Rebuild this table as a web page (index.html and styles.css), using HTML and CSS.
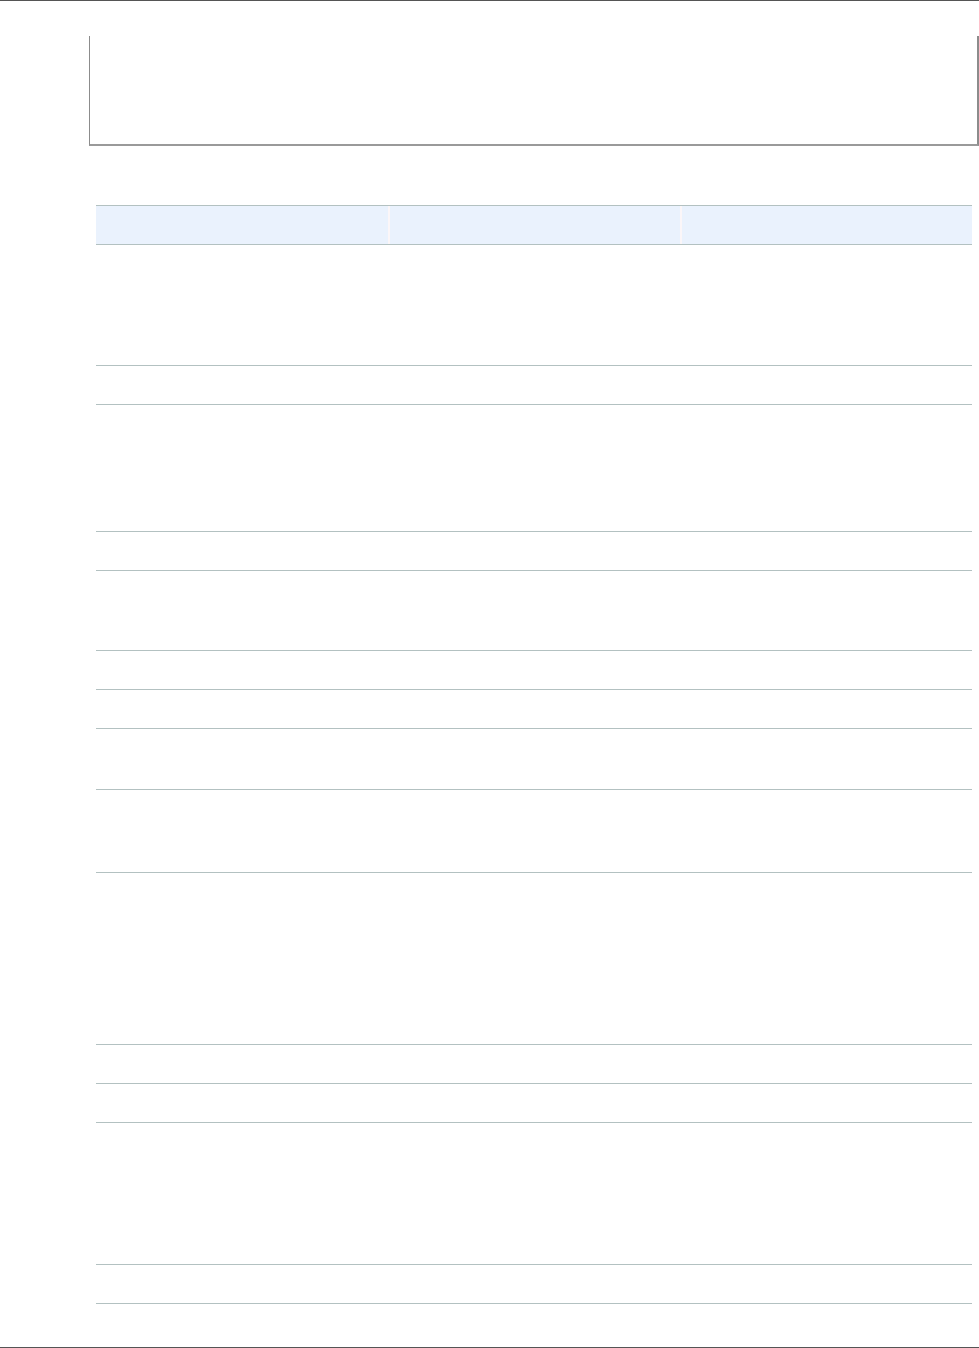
FILE: index.html
```html
<!DOCTYPE html>
<html lang="en">
<head>
<meta charset="utf-8">
<title>Document page</title>
<link rel="stylesheet" href="styles.css">
</head>
<body>
<div class="page">
  <div class="note-box"></div>
  <div class="table">
    <div class="row head">
      <div class="cell"></div>
      <div class="cell"></div>
      <div class="cell"></div>
    </div>
    <div class="row h121"><div class="cell"></div><div class="cell"></div><div class="cell"></div></div>
    <div class="row h39"><div class="cell"></div><div class="cell"></div><div class="cell"></div></div>
    <div class="row h127"><div class="cell"></div><div class="cell"></div><div class="cell"></div></div>
    <div class="row h39"><div class="cell"></div><div class="cell"></div><div class="cell"></div></div>
    <div class="row h80"><div class="cell"></div><div class="cell"></div><div class="cell"></div></div>
    <div class="row h39"><div class="cell"></div><div class="cell"></div><div class="cell"></div></div>
    <div class="row h39"><div class="cell"></div><div class="cell"></div><div class="cell"></div></div>
    <div class="row h61"><div class="cell"></div><div class="cell"></div><div class="cell"></div></div>
    <div class="row h83"><div class="cell"></div><div class="cell"></div><div class="cell"></div></div>
    <div class="row h172"><div class="cell"></div><div class="cell"></div><div class="cell"></div></div>
    <div class="row h39"><div class="cell"></div><div class="cell"></div><div class="cell"></div></div>
    <div class="row h39"><div class="cell"></div><div class="cell"></div><div class="cell"></div></div>
    <div class="row h142"><div class="cell"></div><div class="cell"></div><div class="cell"></div></div>
    <div class="row h39"><div class="cell"></div><div class="cell"></div><div class="cell"></div></div>
  </div>
</div>
</body>
</html>
```

FILE: styles.css
```css
html, body {
  margin: 0;
  padding: 0;
  background: #ffffff;
  font-family: "Liberation Sans", Arial, sans-serif;
}

.page {
  box-sizing: border-box;
  width: 979px;
  height: 1348px;
  border-top: 1px solid #555555;
  border-bottom: 1px solid #555555;
  padding-top: 35px;
  overflow: hidden;
}

.note-box {
  box-sizing: border-box;
  margin-left: 89px;
  width: 890px;
  height: 110px;
  border: 1px solid #8c8c8c;
  border-top: none;
  border-right-width: 2px;
  border-bottom-width: 2px;
  border-bottom-color: #9a9a9a;
}

.table {
  margin-top: 59px;
  margin-left: 96px;
  width: 876px;
}

.row {
  box-sizing: border-box;
  display: grid;
  grid-template-columns: 292px 292px 292px;
  border-bottom: 1px solid #b3c1c1;
}

.head {
  height: 40px;
  border-top: 1px solid #b3c1c1;
  background: #eaf2fd;
}

.head .cell + .cell {
  border-left: 2px solid #fbf6f8;
}

.h39 { height: 39px; }
.h61 { height: 61px; }
.h80 { height: 80px; }
.h83 { height: 83px; }
.h121 { height: 121px; }
.h127 { height: 127px; }
.h142 { height: 142px; }
.h172 { height: 172px; }
```
